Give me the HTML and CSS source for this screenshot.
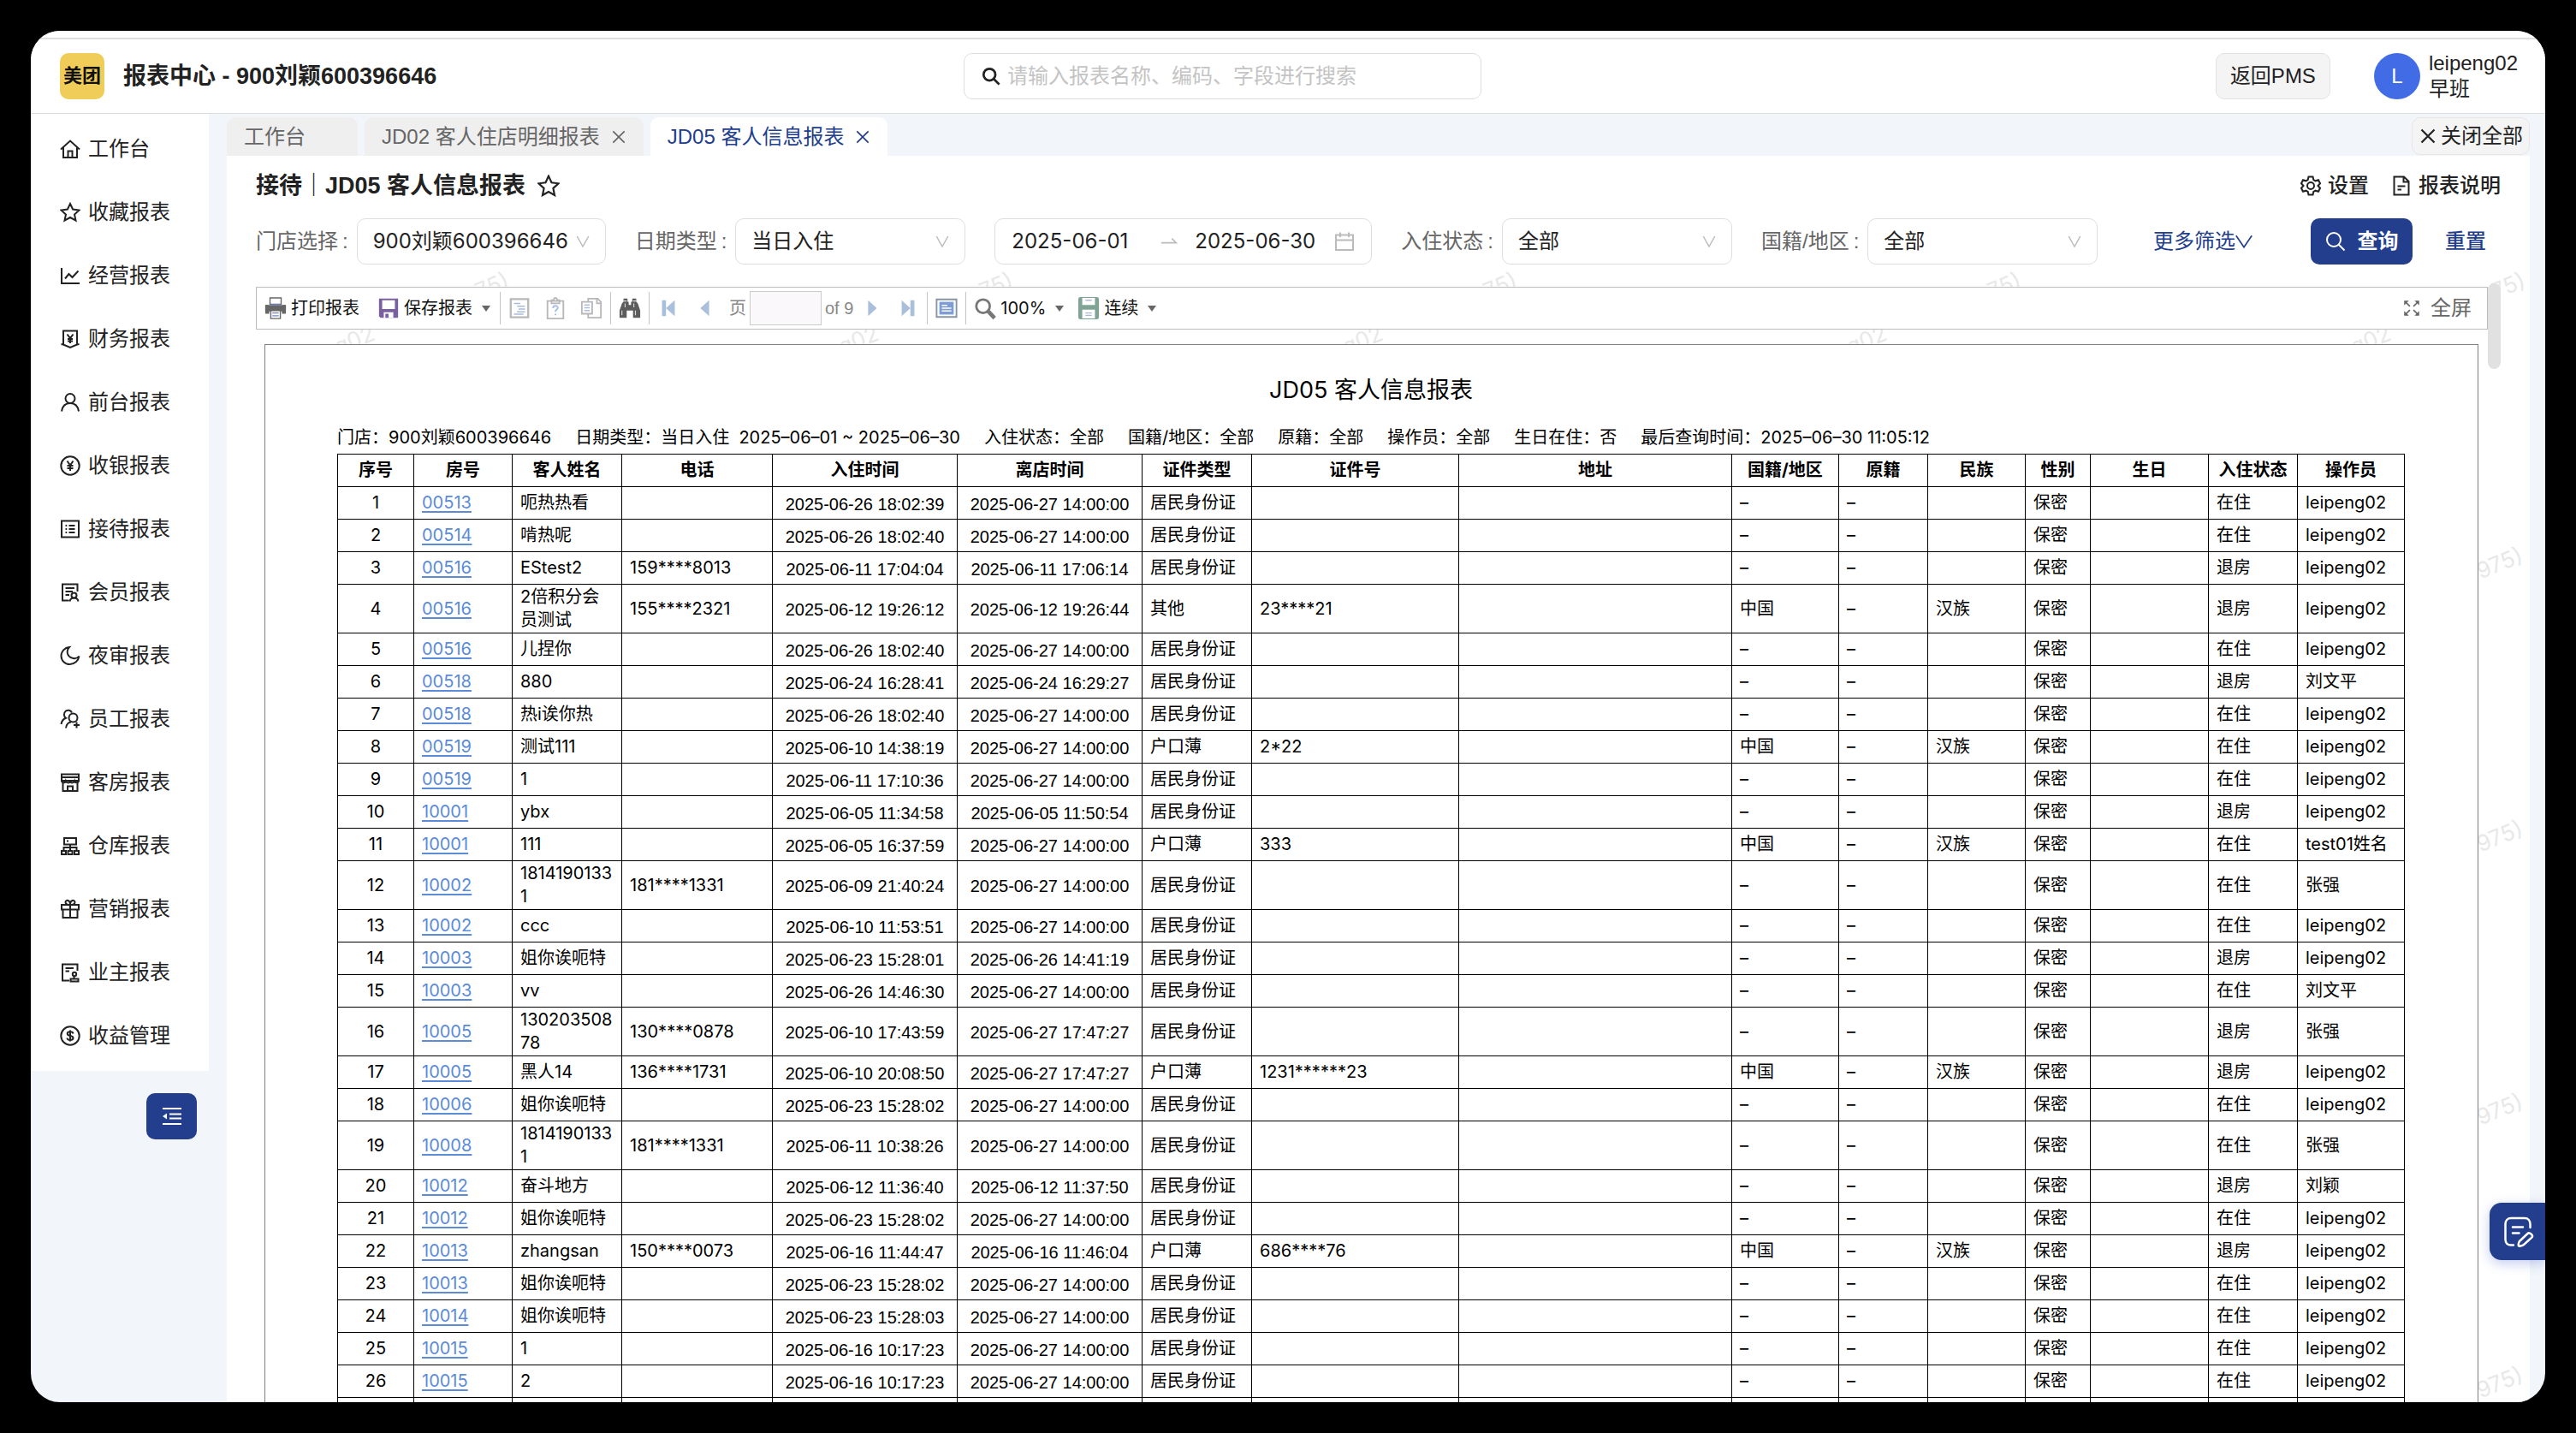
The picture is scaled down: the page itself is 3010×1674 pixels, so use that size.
FILE: index.html
```html
<!DOCTYPE html>
<html lang="zh-CN">
<head>
<meta charset="utf-8">
<title>报表中心</title>
<link rel="stylesheet" href="styles.css">
</head>
<body>
<div class="app">
  <header class="header">
    <div class="brand">
      <span class="logo">美团</span>
      <h1 class="brand-title">报表中心 - 900刘颖600396646</h1>
    </div>
    <label class="search">
      <svg class="icon" viewBox="0 0 24 24"><circle cx="10" cy="10" r="7.5"/><path d="M15.5 15.5L22.5 22.5"/></svg>
      <input type="text" aria-label="搜索报表" placeholder="请输入报表名称、编码、字段进行搜索">
    </label>
    <div class="account">
      <button class="back-btn" type="button">返回PMS</button>
      <span class="avatar">L</span>
      <div class="user"><div>leipeng02</div><div>早班</div></div>
    </div>
  </header>

  <div class="body">
    <aside class="side">
      <nav class="menu">
        <a href="#"><svg class="icon" viewBox="0 0 24 24"><path d="M1 12.5L12 2.5L23 12.5M4 10.5V22H20V10.5M9.5 22V14.500H14.5V22"/></svg>工作台</a>
        <a href="#"><svg class="icon" viewBox="0 0 24 24"><path d="M12 2L15.100 8.500L22.500 9.500L17 14.500L18.500 21.500L12 18L5.500 21.500L7 14.500L1.500 9.500L8.900 8.500Z"/></svg>收藏报表</a>
        <a href="#"><svg class="icon" viewBox="0 0 24 24"><path d="M2 3V21H23M6 15.500L10.500 10L14.500 14L21.500 6.500"/></svg>经营报表</a>
        <a href="#"><svg class="icon" viewBox="0 0 24 24"><path d="M4 18V2.500H20V18M1.500 18L4 18.500L12 22L20 18.500L22.500 18M8.500 6.500L12 11L15.500 6.500M12 11V17M9 12H15M9 14.500H15"/></svg>财务报表</a>
        <a href="#"><svg class="icon" viewBox="0 0 24 24"><circle cx="12" cy="7.500" r="5.500"/><path d="M2 22.500C3 16 7 13 12 13S21 16 22 22.500"/></svg>前台报表</a>
        <a href="#"><svg class="icon" viewBox="0 0 24 24"><circle cx="12" cy="12" r="10.700"/><path d="M8.500 6.500L12 11.500L15.500 6.500M12 11.500V18M8.500 12H15.500M8.500 15H15.500"/></svg>收银报表</a>
        <a href="#"><svg class="icon" viewBox="0 0 24 24"><path d="M2 2.500H22V21.500H2ZM10.500 8H17.500M10.500 12H17.500M10.500 16H17.500M6.500 8H8.200M6.500 12H8.200M6.500 16H8.200"/></svg>接待报表</a>
        <a href="#"><svg class="icon" viewBox="0 0 24 24"><path d="M20.500 11V2.500H3V21.500H10.500M6.500 7H17M6.500 11H15M6.500 15H11M11.500 22.500C12 19.500 14 18.500 16.500 18.500S21 19.500 21.500 22.500"/><circle cx="16.500" cy="15.500" r="3"/></svg>会员报表</a>
        <a href="#"><svg class="icon" viewBox="0 0 24 24"><path d="M11 2C5.500 2.500 1.500 7 1.500 12.200C1.500 17.800 6 22 11.500 22C17 22 21.500 18 22.500 12.500C20.500 15 18 15.500 15.500 15C11.500 14.300 9 11.500 8.700 8C8.500 5.500 9.500 3.500 11 2Z"/></svg>夜审报表</a>
        <a href="#"><svg class="icon" viewBox="0 0 24 24"><path d="M14 4.500C12.500 1.500 9 1 6.700 2.800C4 5 4.500 9 7 10.800C4 12 2 14.500 1.500 18M7 22.500C7.500 18.500 9.500 16 13 15.500M19.500 15.500V22.500M16 19H23"/><circle cx="15.500" cy="10.500" r="5"/></svg>员工报表</a>
        <a href="#"><svg class="icon" viewBox="0 0 24 24"><path d="M2 2.500H22V10H2ZM2 6H22M3.500 11V22H20.500V11M2 10C2.500 13 6.500 13 7 10.500C8 13 11.500 13 12 10.500C12.500 13 16 13 17 10.500C17.500 13 21.500 13 22 10M9 22V16.500H15V22"/></svg>客房报表</a>
        <a href="#"><svg class="icon" viewBox="0 0 24 24"><path d="M5 3H19V10.500H5ZM12 10.500V18M4.500 18V14H19.500V18M2 18H7V22H2ZM9.500 18H14.500V22H9.500ZM17 18H22V22H17ZM8 6.500H10"/></svg>仓库报表</a>
        <a href="#"><svg class="icon" viewBox="0 0 24 24"><path d="M2 7H22V12.500H2ZM3.500 12.500V22H20.500V12.500M12 7V22M12 7C8 7 6.500 5.500 6.500 4C6.500 2.500 8 1.500 9.500 2C11 2.500 12 4 12 7C12 4 13 2.500 14.500 2C16 1.500 17.500 2.500 17.500 4C17.500 5.500 16 7 12 7Z"/></svg>营销报表</a>
        <a href="#"><svg class="icon" viewBox="0 0 24 24"><path d="M20.500 10V2.500H3V21.500H11M6.500 7H16M6.500 10.500H11M16.500 16V19M12.500 22.500V19.500H21.500V22.500Z"/><circle cx="17" cy="14" r="2.200"/></svg>业主报表</a>
        <a href="#"><svg class="icon" viewBox="0 0 24 24"><circle cx="12" cy="12" r="10.700"/><path d="M15.500 9.500C15.300 8 14 7.300 12 7.300S8.700 8 8.700 9.600C8.700 11.300 10 11.700 12 12S15.500 13 15.500 14.600S14 17 12 17S8.600 16.200 8.500 14.500M12 5.500V18.500"/></svg>收益管理</a>
      </nav>
      <button class="collapse" type="button" aria-label="收起菜单">
        <svg class="icon" viewBox="0 0 24 24"><path d="M1 3H23M9 9.500H23M9 14.500H23M1 21H23"/><path class="solid" d="M1 12L6 8.500V15.500Z"/></svg>
      </button>
    </aside>

    <main class="main">
      <div class="tabs">
        <a class="tab" href="#">工作台</a>
        <a class="tab tab-closable" href="#">JD02 客人住店明细报表<svg class="icon x" viewBox="0 0 24 24"><path d="M4 4L20 20M20 4L4 20"/></svg></a>
        <a class="tab tab-closable active" href="#">JD05 客人信息报表<svg class="icon x" viewBox="0 0 24 24"><path d="M4 4L20 20M20 4L4 20"/></svg></a>
        <button class="close-all" type="button"><svg class="icon" viewBox="0 0 24 24"><path d="M2 2L22 22M22 2L2 22"/></svg>关闭全部</button>
      </div>

      <section class="panel">
        <div class="title-row">
          <h2>接待｜JD05 客人信息报表</h2>
          <button class="plain star" type="button" aria-label="收藏"><svg class="icon" viewBox="0 0 24 24"><path d="M12 1.500L15.200 8.500L22.700 9.500L17 14.700L18.500 22.200L12 18.500L5.500 22.200L7 14.700L1.300 9.500L8.800 8.500Z"/></svg></button>
          <div class="title-actions">
            <button class="plain" type="button"><svg class="icon" viewBox="0 0 24 24"><path d="M9.500 1.500H14.500L15.300 5L17.500 6.300L21 5.200L23 9.300L20.500 12L23 14.700L21 18.800L17.500 17.700L15.300 19L14.500 22.500H9.500L8.700 19L6.500 17.700L3 18.800L1 14.700L3.500 12L1 9.300L3 5.200L6.500 6.300L8.700 5Z"/><circle cx="12" cy="12" r="4"/></svg>设置</button>
            <button class="plain" type="button"><svg class="icon" viewBox="0 0 24 24"><path d="M3.500 1.500H15L20.500 7V22.500H3.500ZM14.500 1.500V7.500H20.500M7.500 12.500H16.500M7.500 16.500H12"/></svg>报表说明</button>
          </div>
        </div>

        <form class="filters">
          <div class="field wide"><label for="store">门店选择</label><span class="select"><select id="store"><option>900刘颖600396646</option></select><svg class="icon" viewBox="0 0 24 24"><path d="M3 4L12 20L21 4"/></svg></span></div>
          <div class="field"><label for="dtype">日期类型</label><span class="select"><select id="dtype"><option>当日入住</option></select><svg class="icon" viewBox="0 0 24 24"><path d="M3 4L12 20L21 4"/></svg></span></div>
          <div class="range">
            <input type="text" aria-label="开始日期" value="2025-06-01">
            <svg class="icon arrow" viewBox="0 0 24 24"><path d="M1 14H22L16 8"/></svg>
            <input type="text" aria-label="结束日期" value="2025-06-30">
            <svg class="icon cal" viewBox="0 0 24 24"><path d="M2 4.500H22V22H2ZM2 10.500H22M7 1.500V7M17 1.500V7"/></svg>
          </div>
          <div class="field"><label for="state">入住状态</label><span class="select"><select id="state"><option>全部</option></select><svg class="icon" viewBox="0 0 24 24"><path d="M3 4L12 20L21 4"/></svg></span></div>
          <div class="field"><label for="nation">国籍/地区</label><span class="select"><select id="nation"><option>全部</option></select><svg class="icon" viewBox="0 0 24 24"><path d="M3 4L12 20L21 4"/></svg></span></div>
          <div class="filter-actions">
            <button class="plain more" type="button">更多筛选<svg class="icon" viewBox="0 0 24 24"><path d="M1 4L12 20L23 4"/></svg></button>
            <button class="query" type="button"><svg class="icon" viewBox="0 0 24 24"><circle cx="10" cy="10" r="8"/><path d="M15.500 15.500L22.500 22.500"/></svg>查询</button>
            <button class="plain reset" type="button">重置</button>
          </div>
        </form>

        <div class="viewer">
          <div class="marks" aria-hidden="true" id="marks"></div>
          <div class="viewer-main">
            <div class="toolbar">
              <button class="tool" type="button"><svg class="ti" viewBox="0 0 28 28"><path fill="#666" d="M1 10h4v4h18v-4h4v11h-5v-3H6v3H1z"/><path fill="#fff" stroke="#666" stroke-width="1.500" d="M7 1h14v8H7zM8 17h12v10H8z"/><path fill="#666" d="M1 11q0-1 1-1h24q1 0 1 1v6H1z"/><path stroke="#6f88c4" stroke-width="1.500" d="M8 9.500h12M10 20h8M10 23.500h8"/></svg>打印报表</button>
              <button class="tool save" type="button"><svg class="ti" viewBox="0 0 28 28"><path fill="#7b5fa3" d="M2 2h24v24H4l-2-2z"/><path fill="#fff" d="M6 4h16v11H6zM8 19h12v7H8z"/><path fill="#7b5fa3" d="M10 21h4v5h-4z"/></svg>保存报表<i class="caret"></i></button>
              <span class="sep"></span>
              <button class="tool off" type="button" aria-label="目录"><svg class="ti" viewBox="0 0 28 28"><path fill="none" stroke="#b8b8b8" stroke-width="2.500" d="M3 2.500h22v23H3z"/><path stroke="#aabbdc" stroke-width="1.500" d="M7 8h8M11 11.500h10M13 15h8M11 18.500h10M7 21.500h12"/></svg></button>
              <button class="tool off" type="button" aria-label="参数"><svg class="ti" viewBox="0 0 28 28"><path fill="none" stroke="#b8b8b8" stroke-width="2" d="M4 5h20v22H4zM9 8V4h3c0-4 4-4 4 0h3v4z"/><path fill="none" stroke="#aac0e4" stroke-width="2.200" d="M11 14c0-4 6-4 6-.5 0 2.500-3 2-3 5M14 21v2"/></svg></button>
              <button class="tool off" type="button" aria-label="复制"><svg class="ti" viewBox="0 0 28 28"><path fill="#fff" stroke="#b8b8b8" stroke-width="2" d="M10 2h12l4 4v20H10zM21 2v6h5"/><path fill="#fff" stroke="#b8b8b8" stroke-width="2" d="M2 6h13v15H2z"/><path stroke="#aabbdc" stroke-width="1.500" d="M5 10h7M5 13.500h7M5 17h7"/></svg></button>
              <span class="sep"></span>
              <button class="tool" type="button" aria-label="查找"><svg class="ti" viewBox="0 0 28 28"><path fill="#5c5c5c" d="M6 2h5v4h1.500v4h3V6H17V2h5v4l2 2 3 9v9h-9v-9h-8v9H1v-9l3-9 2-2z"/><path stroke="#ddd" stroke-width="1.200" d="M4 17v6M21 17v6M8 8v5M19 8v5M6 5h4M18 5h4"/></svg></button>
              <span class="sep"></span>
              <button class="tool" type="button" aria-label="第一页"><svg class="ti" viewBox="0 0 28 28"><path fill="#a9bfdb" d="M6 4h5v20H6zM22 4v20L11 14z"/></svg></button>
              <button class="tool" type="button" aria-label="上一页"><svg class="ti" viewBox="0 0 28 28"><path fill="#a9bfdb" d="M20 4v20L9 14z"/></svg></button>
              <label class="page">页 <input type="text" aria-label="页码" value=""> <span>of 9</span></label>
              <button class="tool" type="button" aria-label="下一页"><svg class="ti" viewBox="0 0 28 28"><path fill="#a9bfdb" d="M9 4v20l11-10z"/></svg></button>
              <button class="tool" type="button" aria-label="最后一页"><svg class="ti" viewBox="0 0 28 28"><path fill="#a9bfdb" d="M17 4h5v20h-5zM6 4v20l11-10z"/></svg></button>
              <span class="sep"></span>
              <button class="tool" type="button" aria-label="单页"><svg class="ti" viewBox="0 0 28 28"><path fill="#fff" stroke="#8794a6" stroke-width="2" d="M1.500 3h25v22h-25z"/><path fill="#7e9dd2" d="M5 6h18v16H5z"/><path stroke="#fff" stroke-width="1.500" d="M8 10.500h7M8 14h12M8 17.500h12"/></svg></button>
              <span class="sep"></span>
              <button class="tool" type="button"><svg class="ti" viewBox="0 0 28 28"><circle cx="11.500" cy="11.500" r="8.500" fill="none" stroke="#777" stroke-width="3"/><path stroke="#777" stroke-width="5" d="M18 18l8 8.500"/></svg>100%<i class="caret"></i></button>
              <button class="tool" type="button"><svg class="ti" viewBox="0 0 28 28"><rect x="1" y="0" width="26" height="28" rx="3" fill="#7fa394"/><path fill="#fff" d="M6 1h16v9H6zM6 16h16v11H6z"/><path stroke="#a9bad0" stroke-width="1.500" d="M10 4h8M10 20h8M10 23h8"/></svg>连续<i class="caret"></i></button>
              <button class="plain full" type="button"><svg class="icon" viewBox="0 0 24 24"><path d="M3 3L9.500 9.500M21 3L14.500 9.500M3 21L9.500 14.500M21 21L14.500 14.500"/><path class="solid" d="M1.500 1.500H8L1.500 8ZM22.500 1.500V8L16 1.500ZM1.500 22.500V16L8 22.500ZM22.500 22.500H16L22.500 16Z"/></svg>全屏</button>
            </div>
            <div class="sheet">
              <h3>JD05 客人信息报表</h3>
              <div class="meta">
                <span>门店：900刘颖600396646</span><span>日期类型：当日入住&nbsp; 2025–06–01 ~ 2025–06–30</span><span>入住状态：全部</span><span>国籍/地区：全部</span><span>原籍：全部</span><span>操作员：全部</span><span>生日在住：否</span><span>最后查询时间：2025–06–30 11:05:12</span>
              </div>
              <table>
                <colgroup><col class="w89"><col class="w115"><col class="w128"><col class="w176"><col class="w216"><col class="w216"><col class="w128"><col class="w242"><col class="w319"><col class="w125"><col class="w104"><col class="w114"><col class="w76"><col class="w138"><col class="w104"><col class="w125"></colgroup>
                <thead><tr><th>序号</th><th>房号</th><th>客人姓名</th><th>电话</th><th>入住时间</th><th>离店时间</th><th>证件类型</th><th>证件号</th><th>地址</th><th>国籍/地区</th><th>原籍</th><th>民族</th><th>性别</th><th>生日</th><th>入住状态</th><th>操作员</th></tr></thead>
                <tbody id="rows"></tbody>
              </table>
            </div>
          </div>
          <div class="scroll"><div class="thumb"></div></div>
        </div>
      </section>
    </main>
  </div>
  <button class="feedback" type="button" aria-label="反馈"><svg viewBox="0 0 36 36"><path d="M12 33.500H9C5 33.500 2.500 31 2.500 27V9C2.500 5 5 2 9 2H25C29 2 31.500 5 31.500 9V13M11 12.500H23M11 19.500H18.500"/><path d="M19 29L28.500 20C30.500 18 35.500 22 33.500 24.500L24 33C22 34.500 18 35 18 34.500C17.500 33 18 30.500 19 29Z"/></svg></button>
</div>
<script src="rows.js"></script>
</body>
</html>
```
FILE: styles.css
```css
* { box-sizing: border-box; }
body {
  margin: 0;
  padding: 36px;
  background: #000;
  color: #222;
  font: 24px/32px "Liberation Sans", "Noto Sans CJK SC", sans-serif;
}
h1, h2, h3 { margin: 0; font-size: 27px; line-height: 36px; }
a { color: inherit; text-decoration: none; }
button, input, select { font: inherit; color: inherit; margin: 0; padding: 0; border: 0; background: none; }
.icon { width: 24px; height: 24px; flex: none; fill: none; stroke: currentColor; stroke-width: 2; }
.icon .solid { fill: currentColor; stroke: none; }
.plain { display: flex; align-items: center; gap: 8px; }

.app {
  position: relative;
  display: flex;
  flex-direction: column;
  height: calc(100vh - 72px);
  border-radius: 34px;
  overflow: hidden;
  background: #f2f5f9;
}
.header {
  flex: none;
  display: grid;
  grid-template-columns: 1056fr 605px 1211fr;
  align-items: center;
  height: 97px;
  padding: 10px 32px 0 34px;
  background: linear-gradient(#fff 8px, #dedede 8px, #dedede 10px, #fff 10px);
  border-bottom: 1px solid #dcdcdc;
}
.brand, .account { display: flex; align-items: center; }
.brand { gap: 22px; }
.logo {
  width: 52px;
  height: 54px;
  border-radius: 10px;
  background: #efcd58;
  color: #111;
  font-size: 22px;
  font-weight: 700;
  line-height: 54px;
  text-align: center;
}
.search {
  display: flex;
  align-items: center;
  gap: 8px;
  height: 54px;
  padding: 0 20px;
  border: 1px solid #dedede;
  border-radius: 10px;
}
.search .icon { stroke-width: 3; width: 22px; }
.search input { flex: 1; outline: 0; }
.search input::placeholder { color: #c4c4c4; opacity: 1; }
.account { justify-content: flex-end; }
.back-btn { width: 134px; height: 54px; border: 1px solid #e2e2e2; border-radius: 10px; background: #f4f4f4; }
.avatar { width: 54px; height: 54px; margin: 0 10px 0 51px; border-radius: 50%; background: #416ce6; color: #fff; line-height: 54px; text-align: center; }
.user { line-height: 30px; }

.body { flex: 1; display: flex; min-height: 0; }
.side { flex: none; width: 208px; }
.menu { background: #fff; padding: 4px 0; }
.menu a { display: flex; align-items: center; gap: 9px; height: 74px; padding-left: 34px; }
.collapse {
  display: flex;
  align-items: center;
  justify-content: center;
  width: 59px;
  height: 54px;
  margin: 26px 14px 0 auto;
  border-radius: 10px;
  background: #223e8c;
  color: #fff;
}
.main { flex: 1; display: flex; flex-direction: column; min-width: 0; padding: 4px 18px 0 21px; }
.tabs { flex: none; display: flex; gap: 8px; height: 45px; }
.tab { display: flex; align-items: center; min-width: 153px; padding: 0 20px; border-radius: 10px 10px 0 0; background: #efefef; color: #666; }
.tab-closable { gap: 12px; padding-right: 19px; }
.tab.active { background: #fff; color: #223e8c; }
.x { width: 20px; height: 20px; }
.close-all {
  display: flex;
  align-items: center;
  gap: 6px;
  height: 44px;
  margin-left: auto;
  padding: 0 7px 0 9px;
  border: 1px solid #e6e6e6;
  border-radius: 10px;
  background: #f4f4f4;
}
.close-all .icon { width: 18px; height: 18px; stroke-width: 3; }

.panel { flex: 1; display: flex; flex-direction: column; min-height: 0; padding: 17px 34px 0; background: #fff; }
.title-row { flex: none; display: flex; align-items: center; height: 36px; }
.star { margin-left: 14px; }
.star .icon { width: 26px; height: 26px; }
.title-actions { display: flex; gap: 26px; margin-left: auto; font-weight: 500; }
.filters { flex: none; display: flex; gap: 34px; align-items: center; height: 54px; margin: 20px 0 26px; }
.field { display: flex; align-items: center; }
.field label { color: #666; white-space: nowrap; }
.field label::after { content: ":"; margin: 0 10px 0 5px; }
.select { position: relative; width: 269px; }
.wide .select { width: 291px; }
.select select {
  width: 100%;
  height: 54px;
  padding: 0 18px;
  appearance: none;
  border: 1px solid #dedede;
  border-radius: 10px;
  background: #fff;
  font-family: Inter, "Noto Sans CJK SC", sans-serif;
}
.select .icon { position: absolute; right: 18px; top: 18px; width: 18px; height: 18px; color: #bbb; pointer-events: none; }
.range { display: flex; align-items: center; width: 441px; height: 54px; padding: 0 19px; border: 1px solid #dedede; border-radius: 10px; }
.range input { width: 144px; font-family: Inter, sans-serif; }
.range .icon { color: #bbb; }
.range .arrow { width: 20px; height: 20px; margin: 0 20px 0 30px; }
.range .cal { margin-left: auto; }
.filter-actions { display: flex; align-items: center; margin-left: auto; color: #223e8c; }
.more { gap: 0; white-space: nowrap; }
.more .icon { width: 20px; height: 20px; }
.query {
  display: flex;
  align-items: center;
  justify-content: center;
  gap: 14px;
  width: 119px;
  height: 54px;
  margin: 0 38px 0 68px;
  border-radius: 10px;
  background: #223e8c;
  color: #fff;
  font-weight: 700;
}
.reset { font-weight: 500; margin-right: 17px; }

.viewer { position: relative; flex: 1; display: flex; min-height: 0; }
.viewer-main { position: relative; flex: 1; display: flex; flex-direction: column; min-width: 0; }
.scroll { position: relative; flex: none; width: 15px; margin-top: -4px; }
.thumb { height: 100px; border-radius: 8px; background: #e1e1e1; }
.marks span { position: absolute; color: #e8e8e8; font: 26px/30px Inter, sans-serif; transform: rotate(-22deg); }
.toolbar {
  flex: none;
  display: flex;
  align-items: center;
  gap: 16px;
  height: 50px;
  padding: 0 18px 0 9px;
  border: 1px solid #bdbdbd;
  background: #fff;
  font: 20px/28px Inter, "Noto Sans CJK SC", sans-serif;
}
.tool { display: flex; align-items: center; gap: 5px; color: #111; white-space: nowrap; }
.ti { width: 26px; height: 28px; flex: none; fill: none; }
.save { margin: 0 2px 0 5px; }
.sep { width: 1px; height: 38px; margin: 0 -7px; background: #c4c4c4; }
.caret { border: 5px solid transparent; border-top: 7px solid #666; border-bottom: 0; margin-left: 6px; }
.page { display: flex; align-items: center; gap: 4px; margin-right: -7px; color: #888; font-family: "Liberation Sans", "Noto Sans CJK SC", sans-serif; }
.page input { width: 84px; height: 40px; border: 1px solid #ccc; background: #faf8fb; }
.full { margin-left: auto; gap: 12px; color: #666; font-size: 24px; }
.full .icon { width: 20px; height: 20px; }
.sheet {
  flex: 1;
  min-height: 0;
  overflow: hidden;
  margin: 17px 11px 0 10px;
  padding: 35px 85px 0 84px;
  border: 1px solid #808080;
  border-bottom: 0;
  background: #fff;
  color: #000;
  font: 20px/27px Inter, "Noto Sans CJK SC", sans-serif;
}
.sheet h3 { font-weight: 400; text-align: center; }
.meta { display: flex; gap: 28px; margin: 24px 0 5px; white-space: nowrap; }
table { width: 100%; table-layout: fixed; border-collapse: collapse; }
th, td { height: 38px; padding: 1px 9px; border: 1px solid #000; text-align: left; overflow-wrap: anywhere; }
th { padding: 0; text-align: center; }
td a { color: #5b8bd9; text-decoration: underline; text-underline-offset: 3px; }
td.no { text-align: center; }
td.time { padding: 3px 0 0; text-align: center; font-family: "Liberation Sans", sans-serif; }
.w76 { width: 76px; }
.w89 { width: 89px; }
.w104 { width: 104px; }
.w114 { width: 114px; }
.w115 { width: 115px; }
.w125 { width: 125px; }
.w128 { width: 128px; }
.w138 { width: 138px; }
.w176 { width: 176px; }
.w216 { width: 216px; }
.w242 { width: 242px; }
.w319 { width: 319px; }

.feedback {
  position: absolute;
  right: 0;
  bottom: 166px;
  display: flex;
  align-items: center;
  width: 65px;
  height: 67px;
  padding-left: 16px;
  border-radius: 14px 0 0 14px;
  background: #223e8c;
  box-shadow: 0 4px 14px rgba(60, 90, 200, .3);
}
.feedback svg { width: 36px; height: 36px; fill: none; stroke: #fff; stroke-width: 2.500; stroke-linecap: round; }
```
FILE: rows.js
```js
// room, name, phone, check-in, check-out, id type, id number, has nationality, state, operator
const ID = "居民身份证", HK = "户口薄", OUT = "06-27 14:00:00", L = "leipeng02";
const data = [
  ["00513", "呃热热看", "", "06-26 18:02:39", OUT, ID, "", 0, "在住", L],
  ["00514", "啃热呢", "", "06-26 18:02:40", OUT, ID, "", 0, "在住", L],
  ["00516", "EStest2", "159****8013", "06-11 17:04:04", "06-11 17:06:14", ID, "", 0, "退房", L],
  ["00516", "2倍积分会员测试", "155****2321", "06-12 19:26:12", "06-12 19:26:44", "其他", "23****21", 1, "退房", L],
  ["00516", "儿捏你", "", "06-26 18:02:40", OUT, ID, "", 0, "在住", L],
  ["00518", "880", "", "06-24 16:28:41", "06-24 16:29:27", ID, "", 0, "退房", "刘文平"],
  ["00518", "热i诶你热", "", "06-26 18:02:40", OUT, ID, "", 0, "在住", L],
  ["00519", "测试111", "", "06-10 14:38:19", OUT, HK, "2*22", 1, "在住", L],
  ["00519", "1", "", "06-11 17:10:36", OUT, ID, "", 0, "在住", L],
  ["10001", "ybx", "", "06-05 11:34:58", "06-05 11:50:54", ID, "", 0, "退房", L],
  ["10001", "111", "", "06-05 16:37:59", OUT, HK, "333", 1, "在住", "test01姓名"],
  ["10002", "18141901331", "181****1331", "06-09 21:40:24", OUT, ID, "", 0, "在住", "张强"],
  ["10002", "ccc", "", "06-10 11:53:51", OUT, ID, "", 0, "在住", L],
  ["10003", "姐你诶呃特", "", "06-23 15:28:01", "06-26 14:41:19", ID, "", 0, "退房", L],
  ["10003", "vv", "", "06-26 14:46:30", OUT, ID, "", 0, "在住", "刘文平"],
  ["10005", "13020350878", "130****0878", "06-10 17:43:59", "06-27 17:47:27", ID, "", 0, "退房", "张强"],
  ["10005", "黑人14", "136****1731", "06-10 20:08:50", "06-27 17:47:27", HK, "1231******23", 1, "退房", L],
  ["10006", "姐你诶呃特", "", "06-23 15:28:02", OUT, ID, "", 0, "在住", L],
  ["10008", "18141901331", "181****1331", "06-11 10:38:26", OUT, ID, "", 0, "在住", "张强"],
  ["10012", "奋斗地方", "", "06-12 11:36:40", "06-12 11:37:50", ID, "", 0, "退房", "刘颖"],
  ["10012", "姐你诶呃特", "", "06-23 15:28:02", OUT, ID, "", 0, "在住", L],
  ["10013", "zhangsan", "150****0073", "06-16 11:44:47", "06-16 11:46:04", HK, "686****76", 1, "退房", L],
  ["10013", "姐你诶呃特", "", "06-23 15:28:02", OUT, ID, "", 0, "在住", L],
  ["10014", "姐你诶呃特", "", "06-23 15:28:03", OUT, ID, "", 0, "在住", L],
  ["10015", "1", "", "06-16 10:17:23", OUT, ID, "", 0, "在住", L],
  ["10015", "2", "", "06-16 10:17:23", OUT, ID, "", 0, "在住", L]
];
const td = (v, c) => `<td${c ? ` class="${c}"` : ""}>${v}</td>`;
document.getElementById("rows").innerHTML = data.map((r, i) => "<tr>" + [
  td(i + 1, "no"), td(`<a href="#">${r[0]}</a>`), td(r[1]), td(r[2]),
  td("2025-" + r[3], "time"), td("2025-" + r[4], "time"), td(r[5]), td(r[6]), td(""),
  td(r[7] ? "中国" : "–"), td("–"), td(r[7] ? "汉族" : ""), td("保密"), td(""), td(r[8]), td(r[9])
].join("") + "</tr>").join("") + "<tr>" + td("").repeat(16) + "</tr>";

// Watermark fragments showing in the gaps around the sheet
const marks = [];
for (let i = 0; i < 5; i++) {
  marks.push(["75)", 256 + i * 589, -16], ["ng02", 76 + i * 589, 50]);
}
for (let i = 0; i < 4; i++) marks.push(["975)", 2594, 308 + i * 319]);
document.getElementById("marks").innerHTML = marks
  .map(([t, x, y]) => `<span style="left:${x}px;top:${y}px">${t}</span>`).join("");
```
